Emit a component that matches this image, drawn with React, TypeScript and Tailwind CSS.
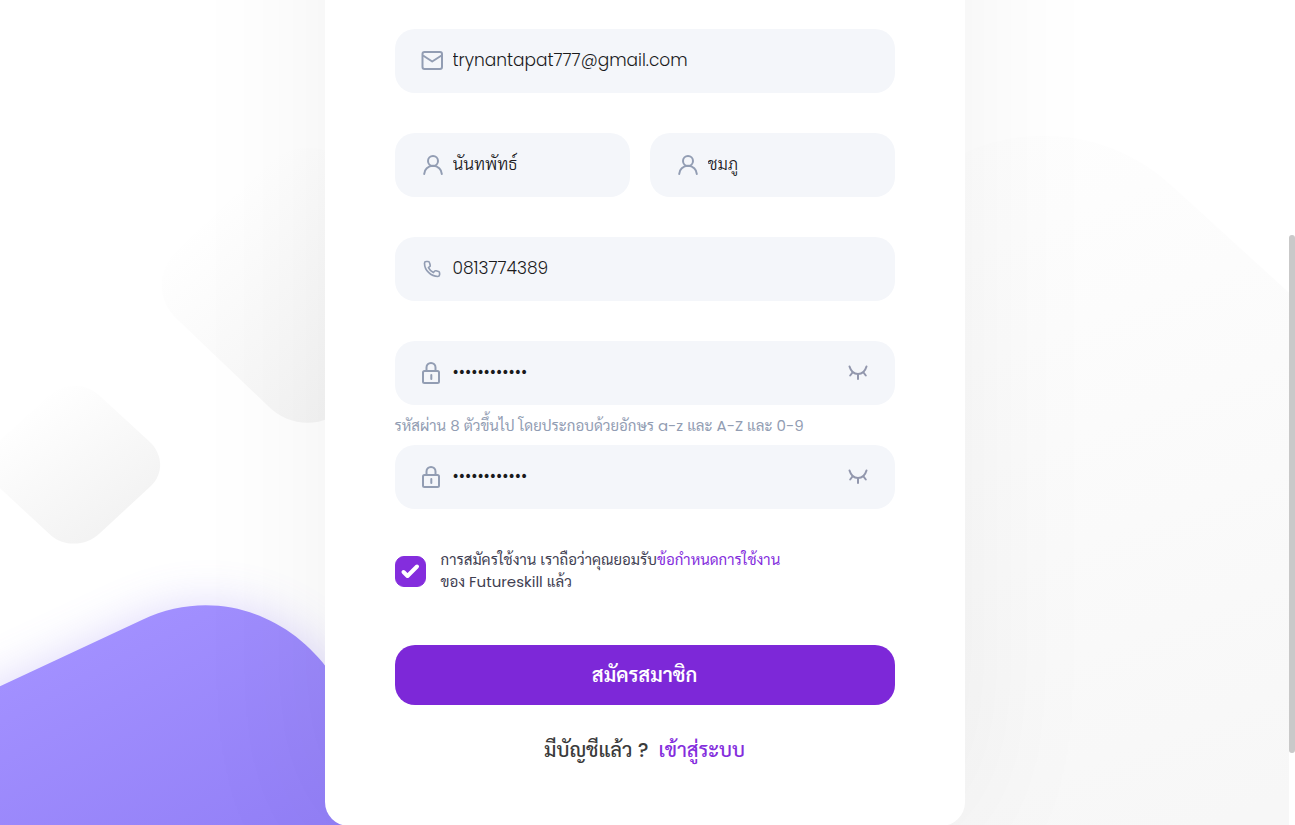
import { useState } from "react";
import type { ReactNode } from "react";

function MailIcon() {
  return (
    <svg width="22" height="20" viewBox="0 0 22 20" fill="none" stroke="currentColor" strokeWidth="2" strokeLinejoin="round" aria-hidden="true">
      <rect x="1.500" y="1" width="19.500" height="17" rx="2" />
      <path d="M2 4.500 11.200 10.500l9.300-6" />
    </svg>
  );
}

function UserIcon() {
  return (
    <svg width="22" height="20" viewBox="-2 0 22 20" fill="none" stroke="currentColor" strokeWidth="2" strokeLinecap="round" aria-hidden="true">
      <circle cx="10" cy="6" r="5" />
      <path d="M1.200 19a8.800 8.200 0 0 1 17.600 0" />
    </svg>
  );
}

function PhoneIcon() {
  return (
    <svg width="18" height="18" viewBox="0 0 24 24" fill="none" stroke="currentColor" strokeWidth="2.200" strokeLinejoin="round" aria-hidden="true">
      <path d="M2 4.200C2 2.900 3 2 4.200 2h2.600c.9 0 1.700.6 1.900 1.500l.9 3.400c.2.8-.1 1.600-.7 2L7.200 10.200c1.500 2.900 3.800 5.100 6.700 6.600l1.400-1.700c.5-.6 1.300-.9 2-.7l3.400.9c.8.2 1.400 1 1.400 1.900v2.600c0 1.200-1 2.200-2.200 2.200C10.500 22 2 13.500 2 4.200Z" />
    </svg>
  );
}

function LockIcon() {
  return (
    <svg width="20" height="22" viewBox="0 0 20 22" fill="none" stroke="currentColor" strokeWidth="2" aria-hidden="true">
      <rect x="1" y="9" width="16" height="12" rx="1.500" />
      <path d="M4.500 9V5.500a4.500 4.500 0 0 1 9 0V9" />
      <path d="M9.300 13v4" strokeLinecap="round" />
    </svg>
  );
}

function ClosedEyeIcon() {
  return (
    <svg width="20" height="16" viewBox="0 0 20 16" fill="none" stroke="currentColor" strokeWidth="2" strokeLinecap="round" aria-hidden="true">
      <path d="M1.500 1.500C3 6.500 6 9 10 9s7-2.500 8.500-7.500" />
      <path d="M10 9v5M4.500 7.500 2.200 10.500M15.500 7.500l2.300 3" />
    </svg>
  );
}

type FieldProps = {
  label: string;
  icon: ReactNode;
  type?: string;
  value: string;
  className?: string;
  toggle?: boolean;
};

function Field({ label, icon, type = "text", value, className = "", toggle = false }: FieldProps) {
  const [text, setText] = useState(value);
  const [visible, setVisible] = useState(false);
  return (
    <div className={`flex h-16 items-center rounded-[20px] bg-[#f4f6fa] px-6 ${className}`}>
      <label className="flex min-w-0 flex-1 items-center gap-2 text-[#929db3]">
        <span className="flex w-[26px] shrink-0 justify-center">{icon}</span>
        <input
          aria-label={label}
          type={visible ? "text" : type}
          value={text}
          onChange={(e) => setText(e.target.value)}
          className="min-w-0 flex-1 bg-transparent text-[17px] font-light text-[#1a1a1c] outline-none"
        />
      </label>
      {toggle && (
        <button
          type="button"
          aria-label="แสดงรหัสผ่าน"
          onClick={() => setVisible(!visible)}
          className="flex w-[26px] justify-center text-[#9297ad]"
        >
          <ClosedEyeIcon />
        </button>
      )}
    </div>
  );
}

function Backdrop() {
  return (
    <svg className="absolute inset-0 h-full w-full" viewBox="0 0 1289 825" preserveAspectRatio="xMidYMid slice" aria-hidden="true">
      <defs>
        <linearGradient id="small" x1="0.2" y1="0.2" x2="0.75" y2="0.85">
          <stop offset="0" stopColor="#ffffff" />
          <stop offset="1" stopColor="#f3f3f3" />
        </linearGradient>
        <linearGradient id="medium" x1="0.2" y1="0.2" x2="0.75" y2="0.85">
          <stop offset="0" stopColor="#ffffff" />
          <stop offset="1" stopColor="#f4f4f4" />
        </linearGradient>
        <linearGradient id="large" gradientUnits="userSpaceOnUse" x1="960" y1="140" x2="1210" y2="825">
          <stop offset="0" stopColor="#fefefe" />
          <stop offset="1" stopColor="#f7f7f7" />
        </linearGradient>
        <linearGradient id="violet" gradientUnits="userSpaceOnUse" x1="100" y1="630" x2="240" y2="900">
          <stop offset="0" stopColor="#a290ff" />
          <stop offset="1" stopColor="#917ef6" />
        </linearGradient>
        <filter id="glow" x="-20%" y="-40%" width="140%" height="180%">
          <feGaussianBlur stdDeviation="24" />
        </filter>
      </defs>
      <path fill="url(#small)" d="M100 395 150 441C164 454 164 473 152 485L101 532C87 546 65 546 52 535L0 487-26 464 50 395C64 382 86 382 100 395Z" />
      <path fill="url(#medium)" d="M178 319 268 405C290 428 326 428 348 405L438 319V250L348 164C326 142 290 142 268 164L178 250C157 270 157 300 178 319Z" />
      <path fill="url(#large)" d="M1289 293 1170 184.500A189 189 0 0 0 916 184.500L800 290V825H1289Z" />
      <path fill="#8a78f0" opacity="0.3" filter="url(#glow)" d="M-80 724 143 620A154 154 0 0 1 347 694L440 900H-80Z" />
      <path fill="url(#violet)" d="M-80 723 143 619C211 587 287 610 331 672L440 900H-80Z" />
    </svg>
  );
}

export default function App() {
  const [accepted, setAccepted] = useState(true);
  return (
    <div className="flex min-h-screen overflow-hidden bg-white font-['Poppins','Sarabun',sans-serif]">
      <div className="relative min-w-0 flex-1">
        <Backdrop />
        <main className="relative mx-auto -mt-48 w-full max-w-[640px] rounded-3xl bg-white px-[70px] pt-[221px] pb-[61px] shadow-[0_0_150px_rgba(0,0,0,0.06)]">
          <form className="flex flex-col" onSubmit={(e) => e.preventDefault()}>
            <div className="flex flex-col gap-10">
              <Field label="อีเมล" type="email" icon={<MailIcon />} value="trynantapat777@gmail.com" />
              <div className="flex gap-5">
                <Field label="ชื่อ" icon={<UserIcon />} value="นันทพัทธ์" className="w-[47%]" />
                <Field label="นามสกุล" icon={<UserIcon />} value="ชมภู" className="min-w-0 flex-1" />
              </div>
              <Field label="เบอร์โทรศัพท์" type="tel" icon={<PhoneIcon />} value="0813774389" />
              <Field label="รหัสผ่าน" type="password" icon={<LockIcon />} value="Abcdef123456" toggle />
            </div>
            <p className="h-10 text-[15px] leading-[42px] whitespace-nowrap text-[#929db3]">
              รหัสผ่าน 8 ตัวขึ้นไป โดยประกอบด้วยอักษร a-z และ A-Z และ 0-9
            </p>
            <Field label="ยืนยันรหัสผ่าน" type="password" icon={<LockIcon />} value="Abcdef123456" toggle />

            <div className="mt-10 flex items-center gap-[15px]">
              <span className="grid size-[31px] shrink-0 place-items-center">
                <input
                  id="terms"
                  type="checkbox"
                  checked={accepted}
                  onChange={(e) => setAccepted(e.target.checked)}
                  className="peer col-start-1 row-start-1 size-[31px] appearance-none rounded-[9px] border border-[#842ddd] checked:bg-[#842ddd]"
                />
                <svg className="pointer-events-none invisible col-start-1 row-start-1 peer-checked:visible" width="20" height="16" viewBox="0 0 20 16" fill="none" stroke="#fff" strokeWidth="4" strokeLinecap="round" strokeLinejoin="round" aria-hidden="true">
                  <path d="m3.500 9 4 4L17 3.500" />
                </svg>
              </span>
              <label htmlFor="terms" className="text-[15px] leading-[22px] text-[#414052]">
                การสมัครใช้งาน เราถือว่าคุณยอมรับ
                <a href="#terms" className="text-[#842ddd]">ข้อกำหนดการใช้งาน</a>
                <br />
                ของ Futureskill แล้ว
              </label>
            </div>

            <button type="submit" className="mt-[52px] h-[60px] rounded-[20px] bg-[#7d28d8] text-xl font-semibold text-white">
              สมัครสมาชิก
            </button>
            <p className="mt-[30px] text-center text-xl leading-[30px] font-medium text-[#3a3a3a]">
              มีบัญชีแล้ว ?
              <a href="#login" className="ml-[10px] text-[#842ddd]">เข้าสู่ระบบ</a>
            </p>
          </form>
        </main>
      </div>
      <div className="w-[6px] shrink-0 bg-white pt-[235px]">
        <div className="h-[518px] rounded-full bg-[#c9c9c9]" />
      </div>
    </div>
  );
}
